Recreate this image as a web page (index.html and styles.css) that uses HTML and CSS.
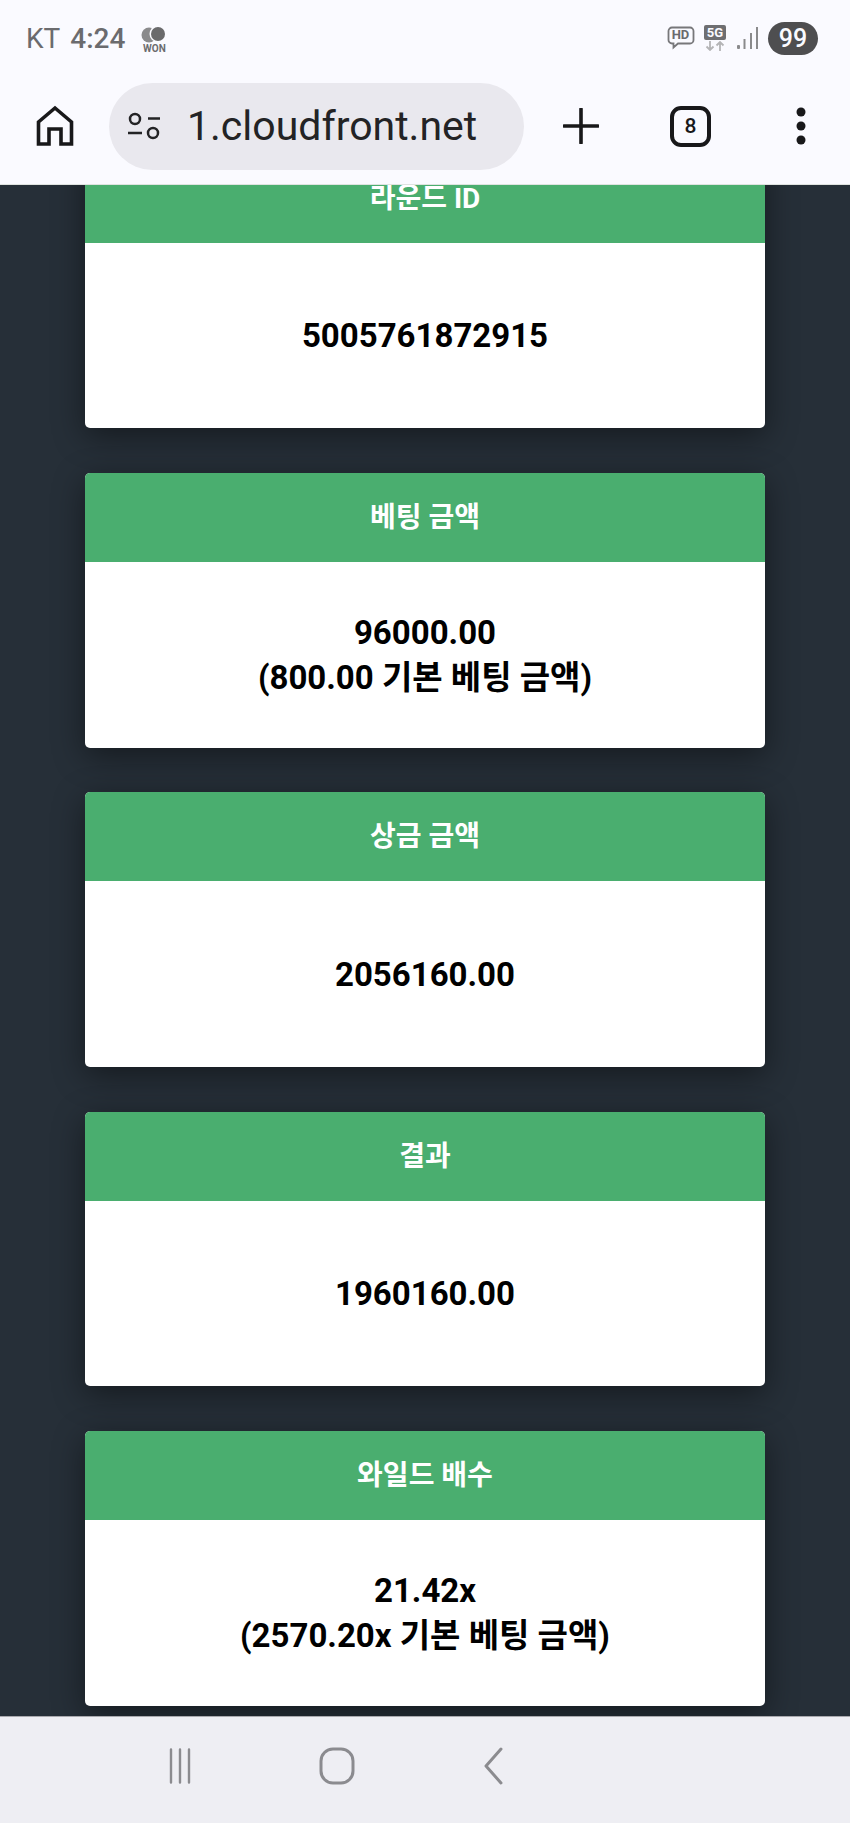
FILE: index.html
```html
<!DOCTYPE html>
<html lang="ko">
<head>
  <meta charset="UTF-8" />
  <title>라운드 상세</title>
  <link rel="stylesheet" href="styles.css">
</head>
<body>
  <div class="phone">

    <!-- status + browser bar -->
    <header class="top">
      <div class="status">
        <div class="status-left">
          <span class="carrier">KT</span>
          <span class="clock">4:24</span>
          <span class="won">
            <svg width="30" height="17" viewBox="0 0 30 17"><circle cx="10" cy="9" r="7.5" fill="#8a8a8c"/><circle cx="18.500" cy="8" r="8" fill="#fafaff"/><circle cx="19" cy="8" r="7" fill="#6a6a6c"/></svg>
            <span class="won-text">WON</span>
          </span>
        </div>
        <div class="status-right">
          <svg class="hd-icon" width="28" height="24" viewBox="0 0 28 24"><path d="M5 1.500h18a3.500 3.500 0 0 1 3.500 3.500v9a3.500 3.500 0 0 1-3.500 3.500H11l-4.500 4v-4H5A3.500 3.500 0 0 1 1.500 14V5A3.500 3.500 0 0 1 5 1.500z" fill="none" stroke="#77777a" stroke-width="1.800"/></svg>
          <span class="hd-text">HD</span>
          <span class="net">
            <span class="net-5g">5G</span>
            <svg width="20" height="10" viewBox="0 0 20 10"><path d="M5 0v9M1.500 5.500 5 9l3.500-3.500M15 10V1M11.500 4.500 15 1l3.500 3.500" fill="none" stroke="#b4b4b6" stroke-width="1.800"/></svg>
          </span>
          <svg class="signal" width="22" height="24" viewBox="0 0 22 24"><rect x="0" y="19" width="3" height="4" rx="1" fill="#8a8a8c"/><rect x="6.500" y="13" width="2" height="10" fill="#8a8a8c"/><rect x="13" y="7" width="2" height="16" fill="#8a8a8c"/><rect x="19" y="1" width="2" height="22" fill="#8a8a8c"/></svg>
          <span class="battery">99</span>
        </div>
      </div>
      <div class="browser">
        <svg class="home-icon" width="38" height="42" viewBox="0 0 38 42"><path d="M2.500 39V17L19 3l16.500 14v22H25V24H13v15z" fill="none" stroke="#18181a" stroke-width="3.600" stroke-linejoin="miter"/></svg>
        <div class="url">
          <svg class="tune" width="34" height="28" viewBox="0 0 34 28"><circle cx="8" cy="7" r="5" fill="none" stroke="#232325" stroke-width="2.500"/><path d="M21 6.500h12M1 21h14" stroke="#232325" stroke-width="2.500"/><circle cx="26" cy="21" r="5" fill="none" stroke="#232325" stroke-width="2.500"/></svg>
          <span class="url-text">1.cloudfront.net</span>
        </div>
        <svg class="plus" width="36" height="36" viewBox="0 0 36 36"><path d="M18 1v34M1 18h34" stroke="#18181a" stroke-width="3.600" stroke-linecap="round"/></svg>
        <span class="tabs">8</span>
        <svg class="dots" width="14" height="38" viewBox="0 0 14 38"><circle cx="7" cy="5" r="4.500" fill="#18181a"/><circle cx="7" cy="19" r="4.500" fill="#18181a"/><circle cx="7" cy="33" r="4.500" fill="#18181a"/></svg>
      </div>
    </header>

    <!-- page, scrolled: content sits on the bottom edge and the first card runs under the bar -->
    <main class="page">
      <section class="card">
        <h3 class="card-head">라운드 ID</h3>
        <div class="card-body">5005761872915</div>
      </section>
      <section class="card">
        <h3 class="card-head">베팅 금액</h3>
        <div class="card-body">96000.00<br>(800.00 기본 베팅 금액)</div>
      </section>
      <section class="card">
        <h3 class="card-head">상금 금액</h3>
        <div class="card-body">2056160.00</div>
      </section>
      <section class="card">
        <h3 class="card-head">결과</h3>
        <div class="card-body">1960160.00</div>
      </section>
      <section class="card">
        <h3 class="card-head">와일드 배수</h3>
        <div class="card-body">21.42x<br>(2570.20x 기본 베팅 금액)</div>
      </section>
    </main>

    <nav class="nav">
      <svg width="22" height="36" viewBox="0 0 22 36"><path d="M2 1.500v33M11 1.500v33M20 1.500v33" stroke="#8b8b8f" stroke-width="2.400" stroke-linecap="round"/></svg>
      <svg width="36" height="38" viewBox="0 0 36 38"><rect x="2" y="2" width="32" height="34" rx="12" fill="none" stroke="#8b8b8f" stroke-width="3"/></svg>
      <svg width="20" height="38" viewBox="0 0 20 38"><path d="M18 2 3 19l15 17" fill="none" stroke="#8b8b8f" stroke-width="3" stroke-linecap="round" stroke-linejoin="round"/></svg>
    </nav>
  </div>
</body>
</html>
```

FILE: styles.css
```css
* {
  box-sizing: border-box;
}

html, body {
  margin: 0;
  padding: 0;
}

body {
  font-family: Roboto, "Noto Sans CJK KR", sans-serif;
}

.phone {
  width: 850px;
  height: 1823px;
  display: flex;
  flex-direction: column;
  overflow: hidden;
}

/* top */
.top {
  height: 185px;
  flex: none;
  background: #fafaff;
  border-bottom: 1px solid #dfe3e0;
  position: relative;
  z-index: 1;
}

.status {
  height: 68px;
  padding: 8px 32px 0 26px;
  display: flex;
  justify-content: space-between;
  align-items: center;
  color: #6b6b6e;
}

.status-left {
  display: flex;
  align-items: center;
}

.carrier {
  font-size: 28px;
  margin-right: 10px;
}

.clock {
  font-size: 28px;
  font-weight: 500;
  margin-right: 14px;
}

.won {
  display: flex;
  flex-direction: column;
  align-items: center;
  margin-top: 4px;
}

.won-text {
  font-size: 10px;
  font-weight: 700;
  line-height: 11px;
}

.status-right {
  display: flex;
  align-items: center;
  position: relative;
}

.hd-text {
  position: absolute;
  left: 5px;
  top: 6px;
  font-size: 13px;
  font-weight: 700;
  line-height: 14px;
  color: #6b6b6e;
}

.hd-icon {
  margin-right: 9px;
}

.net {
  display: flex;
  flex-direction: column;
  align-items: center;
  gap: 1px;
  margin-right: 11px;
}

.net-5g {
  background: #6e6e71;
  color: #fafaff;
  border-radius: 2px;
  font-size: 13px;
  font-weight: 700;
  line-height: 15px;
  padding: 0 3px;
}

.signal {
  margin-right: 9px;
}

.battery {
  width: 50px;
  height: 33px;
  border-radius: 17px;
  background: #4e4e50;
  color: #fafaff;
  font-size: 25px;
  font-weight: 500;
  line-height: 33px;
  text-align: center;
}

.browser {
  height: 116px;
  padding: 0 0 0 36px;
  display: flex;
  align-items: center;
}

.home-icon {
  flex: none;
  margin-right: 35px;
}

.url {
  width: 415px;
  height: 87px;
  flex: none;
  border-radius: 44px;
  background: #e9e8ee;
  display: flex;
  align-items: center;
  padding-left: 18px;
  margin-right: 39px;
}

.tune {
  flex: none;
  margin-right: 26px;
}

.url-text {
  font-size: 41px;
  color: #232325;
  white-space: nowrap;
}

.plus {
  flex: none;
  margin-right: 71px;
}

.tabs {
  width: 41px;
  height: 41px;
  flex: none;
  border: 4px solid #18181a;
  border-radius: 11px;
  color: #18181a;
  font-size: 21px;
  font-weight: 500;
  line-height: 33px;
  text-align: center;
  margin-right: 83px;
}

.dots {
  flex: none;
}

/* page */
.page {
  flex: 1;
  min-height: 0;
  background: #262f38;
  padding: 0 85px 10.500px;
  display: flex;
  flex-direction: column;
  justify-content: flex-end;
  gap: 44.670px;
}

.card {
  height: 274.670px;
  flex: none;
  border-radius: 5px;
  overflow: hidden;
  background: #fff;
  box-shadow: 0 8px 32px rgba(0, 0, 0, 0.45);
}

.card-head {
  height: 89px;
  margin: 0;
  background: #4aae6f;
  color: #fff;
  font-size: 28px;
  font-weight: 700;
  line-height: 89px;
  text-align: center;
}

.card-body {
  height: 185.670px;
  display: flex;
  flex-direction: column;
  justify-content: center;
  color: #000;
  font-size: 33px;
  font-weight: 700;
  line-height: 45px;
  text-align: center;
}

/* bottom nav */
.nav {
  height: 107px;
  flex: none;
  background: #eeeef3;
  border-top: 1px solid #a9a9ae;
  display: flex;
  align-items: center;
  padding: 0 0 9px 169px;
  gap: 0 128px;
  position: relative;
}
```
